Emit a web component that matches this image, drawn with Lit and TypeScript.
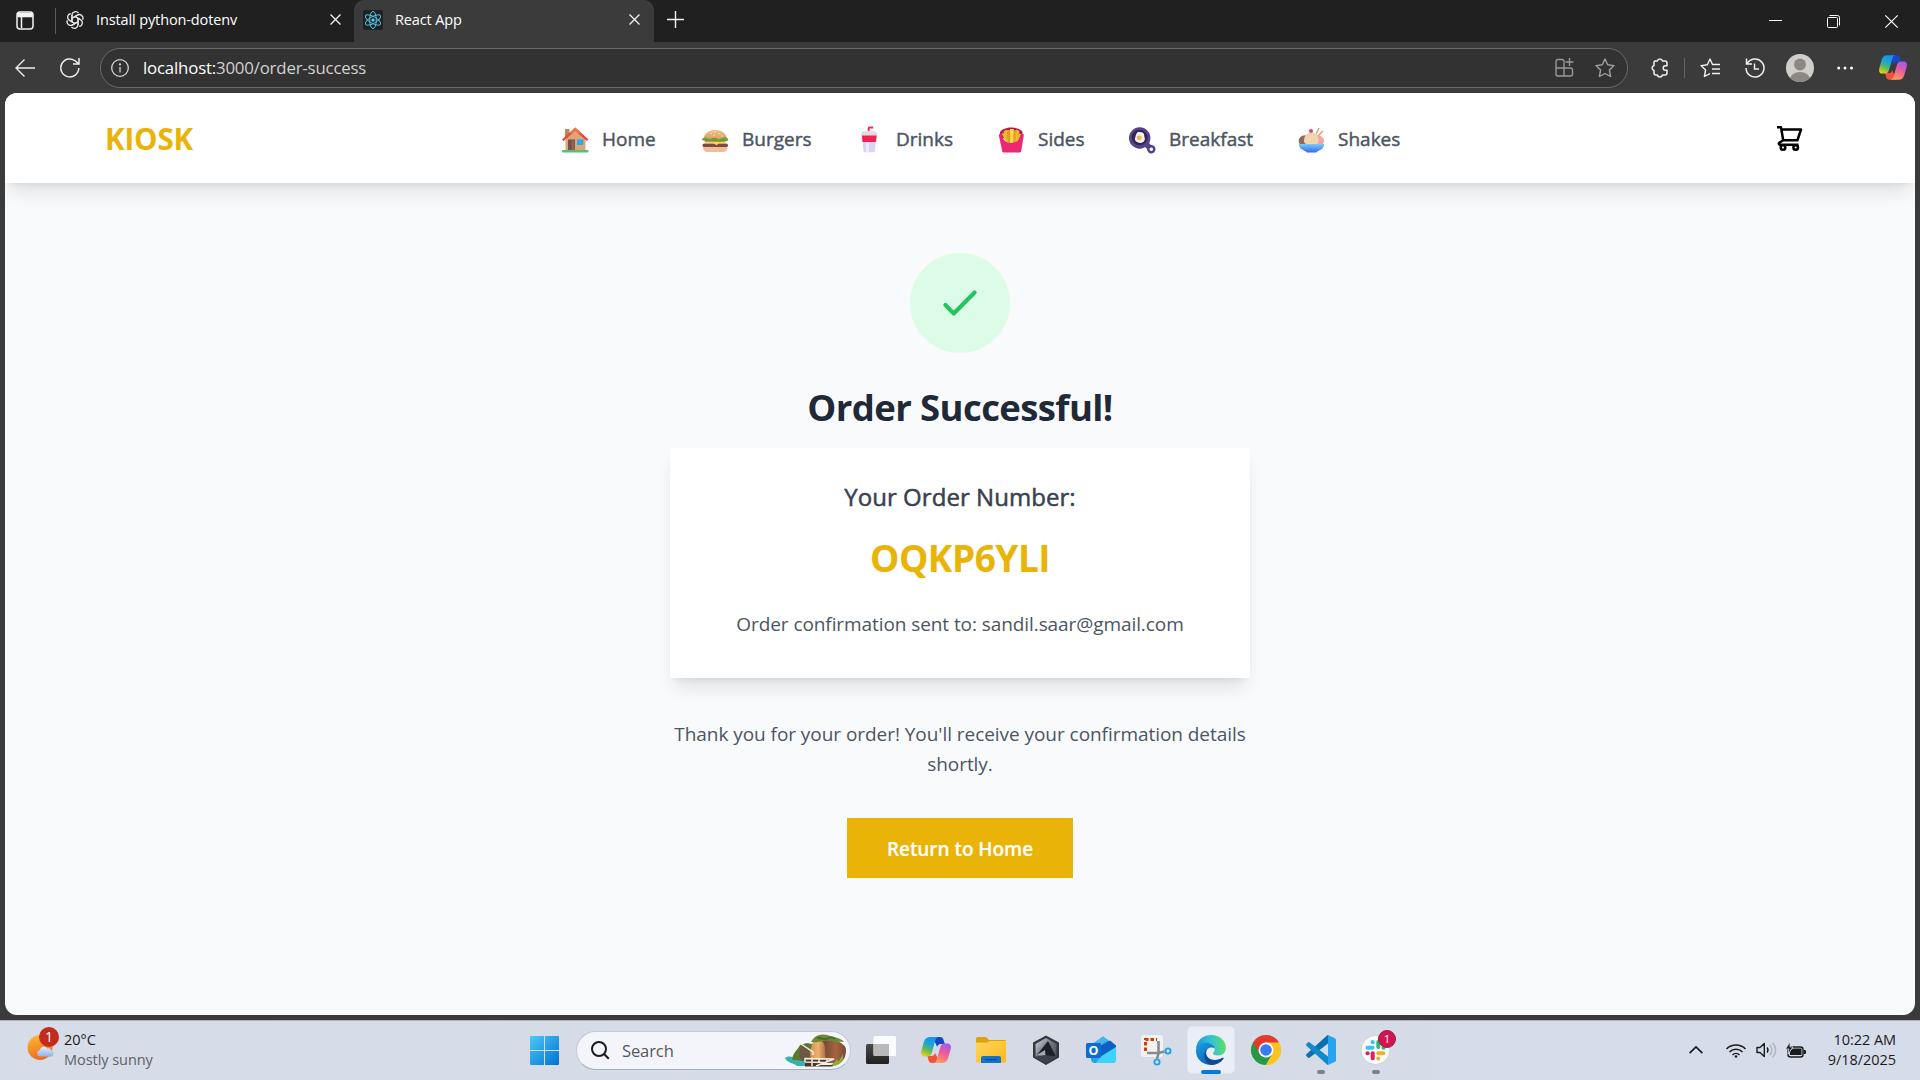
import { LitElement, html, svg, css } from "lit";
import { customElement } from "lit/decorators.js";

const base = css`
  * { box-sizing: border-box; margin: 0; padding: 0; }
  svg { display: block; flex: none; overflow: visible; }
`;

const copilot = (id: string) => svg`
  <defs>
    <linearGradient id="${id}a" x1="0.6" y1="0" x2="0.2" y2="1">
      <stop offset="0" stop-color="#1a8fee"/><stop offset=".35" stop-color="#18a6d8"/>
      <stop offset=".65" stop-color="#5dba5a"/><stop offset="1" stop-color="#f4cf10"/>
    </linearGradient>
    <linearGradient id="${id}b" x1="0.7" y1="0" x2="0.3" y2="1">
      <stop offset="0" stop-color="#a05bf0"/><stop offset=".45" stop-color="#ee5a9c"/>
      <stop offset="1" stop-color="#ffa05a"/>
    </linearGradient>
  </defs>
  <path d="M13 1h6c2 0 3 1 3.600 3l1.200 4h-4c-2 0-3 1-3.600 3L13 4z" fill="#1747c4"/>
  <path d="M17 27h-6c-2 0-3-1-3.600-3L6.500 20h4c2 0 3-1 3.600-3l3 6z" fill="#f0523a"/>
  <path d="M9 1h9c-2 0-3 1-3.700 3.500L11 16c-.8 3-2 4.500-4.500 4.500H3.500C.5 20.500-.5 18 .4 14.500L3 5.500C4 2.500 6 1 9 1z" fill="url(#${id}a)"/>
  <path d="M21 27h-9c2 0 3-1 3.700-3.500L19 12c.8-3 2-4.500 4.500-4.500h3c3 0 4 2.500 3.100 6L27 22.500c-1 3-3 4.500-6 4.500z" fill="url(#${id}b)"/>`;

const closeX = svg`<path d="M.5.5l10 10M10.500.5l-10 10" stroke="#eee" stroke-width="1.400" fill="none"/>`;

@customElement("browser-chrome")
class BrowserChrome extends LitElement {
  static styles = [base, css`
    :host { display: block; font-family: "Open Sans", "Noto Sans", sans-serif; color: #fff; background: #3b3b3b; }
    .tabs { display: flex; height: 42px; background: #202020; align-items: center; }
    .work { padding: 0 0 2px 16px; width: 55px; }
    .sep { width: 1px; height: 26px; background: #5b5b5b; }
    .tab { display: flex; align-items: center; height: 42px; font-size: 14.500px; padding-bottom: 3px; }
    .idle { width: 298px; padding-left: 10px; padding-right: 13px; }
    .live { width: 300px; background: #3b3b3b; border-radius: 10px 10px 0 0; padding: 0 14px 3px 9px; }
    .name { flex: 1; white-space: nowrap; padding-left: 12px; letter-spacing: -.12px; }
    .plus { padding-left: 13px; padding-bottom: 4px; flex: 1; }
    .win { display: flex; gap: 45px; padding-right: 22px; }
    .bar { display: flex; height: 51px; align-items: center; }
    .back { padding-left: 15px; width: 60px; }
    .reload { width: 40px; }
    .addr { display: flex; align-items: center; width: 1528px; height: 40px; border: 1px solid #6b6b6b; border-radius: 20px; background: #323232; padding: 0 12px 0 10px; }
    .url { flex: 1; font-size: 16.800px; padding-left: 14px; letter-spacing: -.17px; line-height: 24px; }
    .path { color: #d0d0d0; }
    .star { padding-left: 21px; }
    .tools { display: flex; align-items: center; padding-left: 22px; }
    .line { width: 1px; height: 20px; background: #636363; margin: 0 15px 0 16px; }
    .hist { padding-left: 25px; }
    .face { padding-left: 21px; }
    .dots { padding-left: 23px; }
    .cop { padding-left: 26px; }
  `];

  render() {
    return html`
      <div class="tabs">
        <div class="work"><svg width="18" height="19" fill="none" stroke="#f2f2f2" stroke-width="1.500"><rect x="1" y="1" width="16" height="17" rx="3"/><path d="M5.500 5v12"/><path d="M2 2.500h14v3H2z" fill="#f2f2f2"/></svg></div>
        <div class="sep"></div>
        <div class="tab idle">
          <svg width="18" height="18" viewBox="-9 -9 18 18" fill="none" stroke="#e8e8e8" stroke-width="1.250" stroke-linejoin="round">
            ${[0, 60, 120, 180, 240, 300].map((a) => svg`<path transform="rotate(${a})" d="M-3 2.200V-4.600A3.600 3.600 0 0 1 3.500-6.800M-3-1.800L2.800-5.200"/>`)}
          </svg>
          <span class="name">Install python-dotenv</span>
          <svg width="11" height="11">${closeX}</svg>
        </div>
        <div class="tab live">
          <svg width="20" height="20" viewBox="-10 -10 20 20" fill="none" stroke="#53c1de" stroke-width="1">
            <rect x="-10" y="-10" width="20" height="20" rx="2" fill="#202124" stroke="none"/>
            <circle r="1.600" fill="#61dafb" stroke="none"/>
            ${[0, 60, 120].map((a) => svg`<ellipse rx="8.600" ry="3.300" transform="rotate(${a + 30})"/>`)}
          </svg>
          <span class="name">React App</span>
          <svg width="11" height="11">${closeX}</svg>
        </div>
        <div class="plus"><svg width="17" height="17" stroke="#f0f0f0" stroke-width="1.400"><path d="M8.500 0v17M0 8.500h17"/></svg></div>
        <div class="win">
          <svg width="13" height="13" stroke="#fff"><path d="M0 5.500h13"/></svg>
          <svg width="13" height="13" stroke="#fff" fill="none"><rect x=".5" y="2.500" width="10" height="10" rx="1"/><path d="M2.500.5h8a2 2 0 0 1 2 2v8"/></svg>
          <svg width="13" height="13" stroke="#fff" stroke-width="1.200"><path d="M.3.3l12.400 12.400M12.700.3L.3 12.700"/></svg>
        </div>
      </div>
      <div class="bar">
        <div class="back"><svg width="20" height="18" fill="none" stroke="#eee" stroke-width="1.400"><path d="M20 9H1M9.500.5L1 9l8.500 8.500"/></svg></div>
        <div class="reload"><svg width="20" height="20" fill="none" stroke="#eee" stroke-width="1.500"><path d="M18.800 10a9 9 0 1 1-3-6.800l2.600 2.600M19 0v6h-6"/></svg></div>
        <div class="addr">
          <svg width="18" height="18" fill="none" stroke="#d5d5d5" stroke-width="1.300"><circle cx="9" cy="9" r="8.300"/><path d="M9 8v5.500"/><circle cx="9" cy="5.400" r=".5"/></svg>
          <span class="url">localhost:<span class="path">3000/order-success</span></span>
          <svg width="19" height="19" fill="none" stroke="#989898" stroke-width="1.400"><path d="M9 10V3.500A2 2 0 0 0 7 1.500H3a2 2 0 0 0-2 2V16a2 2 0 0 0 2 2h12.500a2 2 0 0 0 2-2v-4a2 2 0 0 0-2-2H1M9 10v8M14.500 0v8M10.500 4h8"/></svg>
          <div class="star"><svg width="20" height="20" fill="none" stroke="#a0a0a0" stroke-width="1.400" stroke-linejoin="round"><path d="M10 1l2.700 5.700 6.300.9-4.600 4.400 1.200 6.500-5.600-3-5.600 3 1.200-6.500L1 7.600l6.300-.9z"/></svg></div>
        </div>
        <div class="tools">
          <svg width="18" height="20" fill="none" stroke="#f0f0f0" stroke-width="1.500" stroke-linejoin="round"><path d="M5 3h2.300a2.700 2.700 0 0 1 5.200 0H15a2 2 0 0 1 2 2v2.700h-1.500a2.300 2.300 0 0 0 0 4.600H17V15a2 2 0 0 1-2 2h-2.500a2.700 2.700 0 0 1-5.200 0H6a2 2 0 0 1-2-2v-2.500a2.600 2.600 0 0 1 0-5V4.500A1.500 1.500 0 0 1 5 3z"/></svg>
          <div class="line"></div>
          <svg width="20" height="20" fill="none" stroke="#f0f0f0" stroke-width="1.400" stroke-linejoin="round"><path d="M20 6.500h-7.500L10 1 7.300 6.700 1 7.600l4.600 4.400-1.200 6.500L10 15.600M12 11h8M12 15.500h8"/></svg>
          <div class="hist"><svg width="20" height="20" fill="none" stroke="#f0f0f0" stroke-width="1.500"><path d="M2.200 5.500A9 9 0 1 1 1 10M1.500.5V6H7M9.500 5.500V11H14"/></svg></div>
          <div class="face"><svg width="28" height="28"><defs><clipPath id="av"><circle cx="14" cy="14" r="14"/></clipPath></defs><circle cx="14" cy="14" r="14" fill="#d0ceca"/><g fill="#8e8884" clip-path="url(#av)"><circle cx="14" cy="10.500" r="6"/><ellipse cx="14" cy="25.500" rx="10" ry="7.500"/></g></svg></div>
          <div class="dots"><svg width="16" height="4" fill="#fff"><circle cx="1.700" cy="2" r="1.500"/><circle cx="8" cy="2" r="1.500"/><circle cx="14.500" cy="2" r="1.500"/></svg></div>
          <div class="cop"><svg width="28" height="27" viewBox="0 0 30 28">${copilot("t")}</svg></div>
        </div>
      </div>`;
  }
}

const food = {
  home: svg`
    <rect x="3" y="2" width="4.500" height="9" fill="#b98a5a"/>
    <path d="M3.500 12L13.500 3l10 9v11.500h-20z" fill="#dba776"/>
    <path d="M0 12.500L13.200.6 26.500 12.500l-1.700 1.600L13.200 3.800 1.700 14z" fill="#e8483c"/>
    <path d="M8 5.300L13.200.6l5 4.500-1.700 1.600-3.300-2.900L10 6.700z" fill="#f4714a"/>
    <rect x="6" y="12.500" width="7" height="10.500" fill="#7a5048"/><rect x="9.500" y="13.500" width="3" height="9.500" fill="#8f6259"/>
    <rect x="15" y="12.500" width="6.300" height="5.500" fill="#2da8f2"/>
    <rect x="0" y="23" width="26.500" height="2.500" rx="1" fill="#4fc477"/>`,
  burger: svg`
    <defs><linearGradient id="bun" x2="0" y2="1"><stop stop-color="#f0bf85"/><stop offset="1" stop-color="#df9c5b"/></linearGradient></defs>
    <path d="M1.500 13C1.500 7 6.500 3 13.300 3S25 7 25 13z" fill="url(#bun)"/>
    <path d="M1 18h24.500v2c0 3.500-2 5-4.500 5H5.500C3 25 1 23.500 1 20z" fill="#f0bd9b"/>
    <rect x=".5" y="16.500" width="25.500" height="3.600" rx="1.800" fill="#7c4a40"/>
    <path d="M2 14h22.500l-2 2.500-5-.5-3 2.300-3.500-2.300-8-.2z" fill="#ffd62e"/>
    <path d="M3 12.500h20.500v2H3z" fill="#e8354e"/>
    <path d="M0 12c1-1.800 4-1.400 5-1s3 1.500 4.500.5 4-1 5.500 0 3 .5 4.500-.3 5.500-1 6.500.8-1 2.200-3 1.700-3 1-5 1-3-1.200-5-1.200-3 1-5 .8-2-1.200-4-.8S0 13.500 0 12z" fill="#5aa845"/>
    <g fill="#fff1cf"><circle cx="9" cy="6.500" r=".7"/><circle cx="13" cy="5" r=".7"/><circle cx="17" cy="6.500" r=".7"/><circle cx="12" cy="8.500" r=".7"/><circle cx="20" cy="9" r=".7"/></g>`,
  drink: svg`
    <path d="M12.700 7V1.600a1 1 0 0 1 1-1h3.500" stroke="#e6305c" stroke-width="2" fill="none"/>
    <path d="M6 8.500h14.500L19 24a1.500 1.500 0 0 1-1.500 1.300H9A1.500 1.500 0 0 1 7.500 24z" fill="#dcd3f3"/>
    <path d="M10 16h3v9h-3z" fill="#f1ecfd"/>
    <path d="M5.800 8h14.900l-.7 7H6.500z" fill="#ee2353"/>
    <path d="M5 7.500C5 5.500 7 4 9 4h8.300c2.200 0 4 1.500 4 3.500 0 .7-.4 1-1 1H6c-.6 0-1-.4-1-1z" fill="#dddde3"/>`,
  fries: svg`
    <path d="M2 5C6-1 20.500-1 24.500 5v6h-22z" fill="#b3194f"/>
    <g fill="#f4b928"><path d="M5.500 4.500l3-2 4 12-3 1zM18 2.500l3.500 1.500-3.500 13h-3z"/><path d="M9 3h3.500v13H9z" fill="#e29c1e"/><path d="M12 2h3.800v14h-3.600z" fill="#ffd74a"/><path d="M16 3.500l2.800-.5-1.300 13h-2.600z" fill="#eaa521"/><path d="M3.500 6.500l3-.5 4 8-2 1.500zM21 6l2.500 1.500-3.500 6-2 1z"/></g>
    <path d="M1.800 7c1.500 0 2.500 1 3 3 1 4 4 6 8.300 6s7.500-2 8.500-6c.5-2 1.500-3 3.400-3 .8 0 .8 1 .7 2l-2.500 15c-.2 1-.8 1.500-1.800 1.500H6c-1 0-1.600-.5-1.800-1.500L1 9c-.1-1 0-2 .8-2z" fill="#ee2775"/>`,
  pan: svg`
    <path d="M16 16l5.500 5.500" stroke="#54418a" stroke-width="5.500"/>
    <circle cx="22.300" cy="22.300" r="3" fill="#fff" stroke="#54418a" stroke-width="2.400"/>
    <circle cx="10.700" cy="11" r="10.700" fill="#58418a"/><circle cx="10.700" cy="10.500" r="7.800" fill="#322652"/>
    <path d="M9.500 5c3.500-.5 6 1 5.700 3.500-.2 1.500 1.200 2.500.5 4.500-.8 2.500-4 3.500-6.500 2.500-2.500-.8-4-2.500-3-5 .8-2 .8-5 3.300-5.500z" fill="#f5effa"/>
    <circle cx="10.300" cy="10.800" r="2.400" fill="#ffae36"/>`,
  shake: svg`
    <defs><linearGradient id="bw" x2="0" y2="1"><stop stop-color="#7dccf7"/><stop offset="1" stop-color="#3567f2"/></linearGradient></defs>
    <path d="M17 9l4-8M19 10l6-6" stroke="#d99a58" stroke-width="1.300"/>
    <circle cx="6.500" cy="14" r="5.800" fill="#93695b"/><circle cx="20.500" cy="14" r="5.500" fill="#f7a3a5"/>
    <path d="M6 14c0-5 3-8.500 7.500-8.500S20.500 9 20.500 14c0 3-3 4-7 4s-7.500-1-7.500-4z" fill="#f0d5ad"/>
    <circle cx="13" cy="4" r="2" fill="#f03b70"/>
    <path d="M.8 17h25.400c0 4.500-4 6-7 7.500l-1 1H9l-1-1C5 23 .8 21.500.8 17z" fill="url(#bw)"/>`,
};

@customElement("kiosk-page")
class KioskPage extends LitElement {
  static styles = [base, css`
    :host { display: block; height: 922px; margin: 0 5px; border-radius: 12px; overflow: hidden; background: #f9fafb; font-family: "Open Sans", "Noto Sans", sans-serif; }
    .nav { display: flex; align-items: center; height: 90px; padding: 0 113px 0 100px; background: #fff; box-shadow: 0 12.500px 18.750px -3.750px rgba(0,0,0,.1), 0 5px 7.500px -5px rgba(0,0,0,.1); }
    .brand { width: 457px; font-size: 29.500px; font-weight: 700; color: #eab308; letter-spacing: -.15px; line-height: 40px; padding-top: 1px; }
    .links { flex: 1; display: grid; grid-template-columns: 140px 154px 142px 131px 169px 103px; }
    .link { display: flex; align-items: center; gap: 13px; font-size: 19px; color: #4b5563; line-height: 30px; white-space: nowrap; letter-spacing: 0; -webkit-text-stroke: .45px #4b5563; padding-top: 1px; }
    .link svg { position: relative; top: 1px; }
    .main { display: flex; flex-direction: column; align-items: center; width: 580px; margin: 0 auto; padding-top: 70px; text-align: center; }
    .ok { display: grid; place-items: center; width: 100px; height: 100px; border-radius: 50%; background: #dcfce7; }
    .title { font-size: 36.500px; font-weight: 700; line-height: 45px; color: #1f2937; margin: 32px 0 18px; letter-spacing: -.6px; white-space: nowrap; }
    .card { width: 580px; height: 230px; background: #fff; padding-top: 31px; box-shadow: 0 12.500px 18.750px -3.750px rgba(0,0,0,.1), 0 5px 7.500px -5px rgba(0,0,0,.1); }
    .label { font-size: 24px; line-height: 35px; color: #374151; letter-spacing: .05px; -webkit-text-stroke: .5px #374151; }
    .code { font-size: 37px; font-weight: 700; line-height: 45px; color: #eab308; margin: 21px 0 29px; letter-spacing: -.5px; }
    .mail, .thanks { font-size: 19px; line-height: 30px; color: #4b5563; letter-spacing: -.05px; white-space: nowrap; }
    .mail { letter-spacing: -.08px; }
    .thanks { margin: 41px 0 39px; }
    .btn { width: 226px; height: 60px; border: 0; background: #eab308; color: #fff; font: 600 19px/30px "Open Sans", "Noto Sans", sans-serif; letter-spacing: -.05px; padding-top: 2px; -webkit-text-stroke: .2px #fff; }
  `];

  render() {
    const links: [string, unknown][] = [
      ["Home", food.home], ["Burgers", food.burger], ["Drinks", food.drink],
      ["Sides", food.fries], ["Breakfast", food.pan], ["Shakes", food.shake],
    ];
    return html`
      <div class="nav">
        <div class="brand">KIOSK</div>
        <div class="links">
          ${links.map(([t, i]) => html`<div class="link"><svg width="27" height="26" viewBox="0 0 27 26">${i}</svg><span>${t}</span></div>`)}
        </div>
        <svg width="25" height="25" fill="none" stroke="#000" stroke-width="2.500" stroke-linejoin="round"><path d="M0 1.200h4L6.200 14.300h14.200L24 3.500H4.500M6.200 14.300l-4 2.500c-.8 1 0 2 1.300 2h18"/><circle cx="6" cy="21.500" r="2.300"/><circle cx="18.700" cy="21.500" r="2.300"/></svg>
      </div>
      <div class="main">
        <div class="ok"><svg width="50" height="50" viewBox="0 0 24 24" fill="none" stroke="#22c55e" stroke-width="2" stroke-linecap="round" stroke-linejoin="round"><path d="M5 13l4 4L19 7"/></svg></div>
        <h1 class="title">Order Successful!</h1>
        <div class="card">
          <p class="label">Your Order Number:</p>
          <p class="code">OQKP6YLI</p>
          <p class="mail">Order confirmation sent to: sandil.saar@gmail.com</p>
        </div>
        <p class="thanks">Thank you for your order! You'll receive your confirmation details<br>shortly.</p>
        <button class="btn">Return to Home</button>
      </div>`;
  }
}

const apps = {
  tasks: svg`<defs><linearGradient id="tv" x2="0" y2="1"><stop stop-color="#4a4a48"/><stop offset="1" stop-color="#20201f"/></linearGradient></defs>
    <rect x="0" y="9" width="23" height="20" rx="1.500" fill="url(#tv)"/><rect x="7.500" y="1" width="22.500" height="20" rx="1.500" fill="#fff" opacity=".88"/><path d="M7.500 9H23v12H9a1.500 1.500 0 0 1-1.500-1.500z" fill="#b9b9b9"/>`,
  copilot: svg`<g transform="translate(0 1)">${copilot("b")}</g>`,
  folder: svg`<defs><linearGradient id="fo" x2="1" y2="1"><stop stop-color="#ffd75e"/><stop offset="1" stop-color="#fbb81d"/></linearGradient></defs>
    <path d="M0 4a2 2 0 0 1 2-2h8l3 3h16a1 1 0 0 1 1 1v6H0z" fill="#dfa00f"/><path d="M0 7.500h11l3-1.500h15a1 1 0 0 1 1 1v20.500H0z" fill="url(#fo)"/>
    <path d="M5 28v-5a2 2 0 0 1 2-2h16a2 2 0 0 1 2 2v5z" fill="#1173c9"/><path d="M9 24.600h12" stroke="#0a4d8f" stroke-width="1.300"/>`,
  hex: svg`<defs><linearGradient id="hx" x2="1" y2="1"><stop stop-color="#d5dce2"/><stop offset=".45" stop-color="#727b84"/><stop offset="1" stop-color="#3a3f45"/></linearGradient></defs>
    <path d="M15 .5l13 7v15l-13 7.500-13-7.500v-15z" fill="#35393d"/><path d="M15 3l10.500 6v12.500L15 27.500 4.500 21.500V9z" fill="url(#hx)"/>
    <path d="M17 6l7.500 15-10 2-9-2.500z" fill="#1d2024"/><path d="M5 20.500l9-5.500.500 6z" fill="#a2abb3"/><path d="M4.500 21.500l10-1.500 10 1.500L15 27.500z" fill="#3d4248"/>`,
  outlook: svg`<path d="M4 12L17 1.500 30 11v13a4 4 0 0 1-4 4H9a4 4 0 0 1-4-4z" fill="#29a3e4"/><path d="M6 9L17 1.500 22 5 9 14z" fill="#47b5ee"/>
    <path d="M9 14L24 5.500l6 5v2L14 23z" fill="#0f60c4"/><path d="M14 22l16-10v12a4 4 0 0 1-4 4H10z" fill="#3fd2f8"/>
    <rect y="8" width="15" height="15" rx="1.500" fill="#0f6cd1"/><text x="7.500" y="19.700" text-anchor="middle" font-size="12.500" font-weight="700" fill="#fff">O</text>`,
  snip: svg`<rect width="22" height="22" rx="2.500" fill="#f3f2f2"/><path d="M4.500 16V4.500H16" stroke="#d83b01" stroke-width="3" stroke-dasharray="3.500 2" fill="none"/>
    <path d="M17.500 6v12.500l-1.500 5M6 18h11.500l6-1.500" stroke="#858a90" stroke-width="2.600" fill="none"/><circle cx="16" cy="27" r="2.600" fill="#d6dce8" stroke="#1f9fe4" stroke-width="1.800"/><circle cx="27" cy="16" r="2.600" fill="#d6dce8" stroke="#1f9fe4" stroke-width="1.800"/>`,
  edge: svg`<defs><linearGradient id="e1" x1="0" y1=".5" x2="1" y2=".4"><stop stop-color="#1c92d8"/><stop offset=".5" stop-color="#2fc3da"/><stop offset="1" stop-color="#62e05c"/></linearGradient>
    <linearGradient id="e2" x2=".6" y2="1"><stop stop-color="#1a9de0"/><stop offset="1" stop-color="#0d65bd"/></linearGradient></defs>
    <path d="M0 14C.5 5.500 7 0 15 0c9 0 15 6 15 13 0 4.500-3.500 7.500-8 7.500-3.500 0-5-1.200-5-2.200s1.800-1.500 1.800-4c0-3.500-3.500-6.300-7.800-6.300-5 0-9 2.500-11 6z" fill="url(#e1)"/>
    <path d="M0 15C1 10 6 7.500 10.500 7.800c5 .2 8.300 3 8.300 6-2-2.500-7.800-1.800-8.800 3C9 22.500 13 28 19 29c-1.300.6-3 1-4.500 1C5.500 29.500-.5 23 0 15z" fill="url(#e2)"/>
    <path d="M11.500 13.500c-3 4-1 9 3.500 10.800 4 1.600 8.500.2 11.500-1.500 1-.5 1.600.2 1 1-3 4.500-8 6.500-12.500 6C8 28 6 18 11.500 13.500z" fill="#104a94"/>`,
  chrome: svg`<circle cx="15" cy="15" r="15" fill="#fcc31e"/><path d="M2 7.500A15 15 0 0 0 15 30l6.500-11.250L15 15z" fill="#249a48"/><path d="M15 7.500h13A15 15 0 0 1 15 30l6.500-11.250z" fill="#fcc31e"/><path d="M2 7.500L8.500 18.800 15 15V7.500h13A15 15 0 0 0 2 7.500z" fill="#e33b2e"/>
    <circle cx="15" cy="15" r="7.500" fill="#fff"/><circle cx="15" cy="15" r="5.800" fill="#3a7bf0"/>`,
  code: svg`<path d="M22 0v8.500L3.500 22.800c-.5.400-1 .3-1.400 0L.4 21c-.5-.5-.5-1.200 0-1.700L21 .5z" fill="#0a6fb5"/><path d="M22 30v-8.500L3.500 7.200c-.5-.4-1-.3-1.400 0L.4 9c-.5.500-.5 1.200 0 1.700L21 29.500z" fill="#118acb"/>
    <path d="M22 0l7 3.200c.6.300 1 .9 1 1.600v20.400c0 .7-.4 1.300-1 1.600L22 30z" fill="#27a4ee"/>`,
  slack: svg`<circle cx="14.500" cy="15" r="14.500" fill="#fafafa" stroke="#c7c9cf" stroke-width=".8"/>
    <g fill="none" stroke-width="4" stroke-linecap="round"><path d="M6.500 12.700h5" stroke="#36c5f0"/><path d="M11.700 7v.2" stroke="#36c5f0"/><path d="M17.300 7v5" stroke="#2eb67d"/><path d="M22.500 12.700h.1" stroke="#2eb67d"/><path d="M11.700 18.300v5" stroke="#e01e5a"/><path d="M6.500 18.300h.1" stroke="#e01e5a"/><path d="M17.300 18.300h5" stroke="#ecb22e"/><path d="M17.300 23.500v.1" stroke="#ecb22e"/></g>`,
};

@customElement("task-bar")
class TaskBar extends LitElement {
  static styles = [base, css`
    :host { box-sizing: border-box; display: flex; align-items: center; height: 60px; margin-top: 5px; padding-bottom: 1px; background: linear-gradient(90deg, #d6dde9, #d5dae6 50%, #d6ddea); border-top: 1px solid #aeb3bb; font-family: "Open Sans", "Noto Sans", sans-serif; color: #1b1b1b; }
    .weather { display: flex; width: 530px; padding-left: 27px; }
    .sun { position: relative; width: 37px; padding-top: 5px; }
    .one { position: absolute; display: grid; place-items: center; width: 20px; height: 20px; border-radius: 50%; background: #c42b1c; color: #fff; font-size: 14px; left: 12px; top: -3px; line-height: 20px; }
    .lines { font-size: 14.500px; line-height: 20px; letter-spacing: -.05px; white-space: nowrap; }
    .dim { color: #5d6168; }
    .start { width: 46px; }
    .search { display: flex; align-items: center; width: 275px; height: 39px; margin-right: 2px; border-radius: 20px; background: #f3f5fa; border: 1px solid #c3c9d6; border-bottom-color: #a9aebb; padding: 0 3px 0 14px; font-size: 16.500px; color: #55585d; }
    .word { flex: 1; padding-left: 13px; letter-spacing: -.1px; }
    .cell { position: relative; width: 55px; height: 48px; padding: 9px 12.500px 0; }
    .cell.on { width: 48px; margin: 0 3px 0 4px; background: #eaeef6; border: 1px solid #e1e5ee; border-radius: 5px; padding: 8px; }
    .cell.on .run { width: 20px; height: 4px; bottom: -1px; left: 13px; background: #0a78d6; }
    .run { position: absolute; left: 24px; bottom: 0; width: 8px; height: 4px; border-radius: 2px; background: #7d8187; }
    .ping { position: absolute; left: 30px; top: 4px; width: 18px; height: 18px; border-radius: 50%; background: #d5134f; border: 1px solid #8c2445; color: #fff; font-size: 11.500px; line-height: 16px; text-align: center; }
    .fill { flex: 1; }
    .tray { display: flex; align-items: center; padding-right: 24px; }
    .tray svg { margin-right: 10px; }
    .tray .up { margin-right: 23px; }
    .clock { width: 80px; text-align: right; }
  `];

  render() {
    const cell = (icon: unknown, run = false, extra: unknown = null) =>
      html`<div class="cell"><svg width="30" height="30">${icon}</svg>${run ? html`<div class="run"></div>` : null}${extra}</div>`;
    return html`
      <div class="weather">
        <div class="sun">
          <svg width="28" height="26"><defs><linearGradient id="sn" x1=".3" y1="0" x2=".6" y2="1"><stop stop-color="#f9b934"/><stop offset="1" stop-color="#f0661b"/></linearGradient><linearGradient id="cl" x2="0" y2="1"><stop stop-color="#dfecfd"/><stop offset="1" stop-color="#8fb2ec"/></linearGradient></defs>
            <circle cx="13" cy="12.500" r="12.500" fill="url(#sn)"/><path d="M13 21.500a3.200 3.200 0 0 1-.4-6.300 4.500 4.500 0 0 1 8-1.700 3.500 3.500 0 0 1 4.200 2.600 2.800 2.800 0 0 1-.3 5.400z" fill="url(#cl)"/></svg>
          <div class="one">1</div>
        </div>
        <div class="lines"><div>20°C</div><div class="dim">Mostly sunny</div></div>
      </div>
      <div class="start"><svg width="29" height="29"><defs><linearGradient id="wn" gradientUnits="userSpaceOnUse" x1="0" y1="0" x2="29" y2="29"><stop stop-color="#4cc9f8"/><stop offset="1" stop-color="#0072d2"/></linearGradient></defs><path d="M1 0h13v14H0V1a1 1 0 0 1 1-1zM15 0h13a1 1 0 0 1 1 1v13H15zM0 15h14v14H1a1 1 0 0 1-1-1zM15 15h14v13a1 1 0 0 1-1 1H15z" fill="url(#wn)"/></svg></div>
      <div class="search">
        <svg width="18" height="18" fill="none" stroke="#1c1c1c" stroke-width="2"><circle cx="8" cy="8" r="7"/><path d="M12.800 12.800l5 5"/></svg>
        <span class="word">Search</span>
        <svg width="62" height="33">
          <defs>
            <linearGradient id="r1"><stop stop-color="#d08d50"/><stop offset=".55" stop-color="#efb070"/><stop offset="1" stop-color="#a86a44"/></linearGradient>
            <linearGradient id="r2"><stop stop-color="#6b4434"/><stop offset=".6" stop-color="#a4653f"/><stop offset="1" stop-color="#7b4937"/></linearGradient>
            <clipPath id="pl"><path d="M0 0h45c10 0 16 7 16 17 0 9-7 15.500-15 15.500H0z"/></clipPath>
          </defs>
          <g clip-path="url(#pl)">
            <path d="M0 24c4-3 8-1 10 0l14 4-2 4H12c-2-2-4-2-6-3s-5-2-6-5z" fill="#35b5ae"/>
            <path d="M36 6c8-2 20 0 25 8v12l-8 3H38z" fill="url(#r2)"/>
            <path d="M24 24c0-8 1-16 8-18 5-1 8 3 8 9l1 12H25z" fill="url(#r1)"/>
            <path d="M7 26c1-8 5-9 8-15l7-2 5 1-2 9 1 8z" fill="#5b7a2d"/>
            <path d="M16 12l6-1 3 9v7h-9l-2-6z" fill="#6a5844"/>
            <path d="M26 8c3-6 9-9 16-7s13 3 18 7c-5-1-9 1-13-1-6-2-12 2-21 1z" fill="#6f8b2f"/>
            <path d="M32 4c3-1 6 2 9 1s5-3 9 0" stroke="#3f7130" stroke-width="2" fill="none"/>
            <path d="M20 26l26-1-12 6h14v2H20z" fill="#4c3328"/>
            <path d="M16 10l12 8v3M20 24.500l29 .5-18 7M20 28l20 .5M20 24v4M27 24v8M34 25v4M42 25v3" stroke="#f2eddf" stroke-width="1.500" fill="none"/>
            <path d="M46 31l6-5 2 1 4-7v8l-6 5z" fill="#8fae35"/>
          </g>
        </svg>
      </div>
      ${cell(apps.tasks)}${cell(apps.copilot)}${cell(apps.folder)}${cell(apps.hex)}${cell(apps.outlook)}${cell(apps.snip)}
      <div class="cell on"><svg width="30" height="30">${apps.edge}</svg><div class="run"></div></div>
      ${cell(apps.chrome)}${cell(apps.code, true)}${cell(apps.slack, true, html`<div class="ping">1</div>`)}
      <div class="fill"></div>
      <div class="tray">
        <svg class="up" width="14" height="8" fill="none" stroke="#1b1b1b" stroke-width="1.700"><path d="M.6 7.200L7 1l6.400 6.200"/></svg>
        <svg width="20" height="15" fill="none" stroke="#1b1b1b" stroke-width="1.500"><path d="M.5 6a13.400 13.400 0 0 1 19 0M3.500 9a9.200 9.200 0 0 1 13 0M6.500 12a5 5 0 0 1 7 0"/><circle cx="10" cy="13.500" r="1.300" fill="#1b1b1b" stroke="none"/></svg>
        <svg width="20" height="16" fill="none" stroke="#1b1b1b" stroke-width="1.400"><path d="M1 5.500h3L8.300 1.500v13L4 10.500H1z" stroke-linejoin="round"/><path d="M11 5.500a4 4 0 0 1 0 5"/><path d="M13.700 3a7 7 0 0 1 0 10M16.500.8a10 10 0 0 1 0 14.400" stroke="#b0b5be"/></svg>
        <svg width="20" height="15"><rect x="2" y="4" width="15" height="10" rx="2.500" fill="none" stroke="#1b1b1b" stroke-width="1.400"/><path d="M4 8l3-2.500h8.500V12H4z" fill="#1b1b1b"/><path d="M17.500 7H19a1 1 0 0 1 1 1v2a1 1 0 0 1-1 1h-1.500z" fill="#1b1b1b"/><path d="M4-1L-.5 6H3L2 11l5-7H4z" fill="#1b1b1b" stroke="#d6dce8" stroke-width=".8"/></svg>
        <div class="lines clock"><div>10:22 AM</div><div>9/18/2025</div></div>
      </div>`;
  }
}

@customElement("app-root")
class AppRoot extends LitElement {
  static styles = css`
    :host { display: block; width: 1920px; height: 1080px; overflow: hidden; background: #3b3b3b; }
  `;
  render() {
    return html`<browser-chrome></browser-chrome><kiosk-page></kiosk-page><task-bar></task-bar>`;
  }
}
